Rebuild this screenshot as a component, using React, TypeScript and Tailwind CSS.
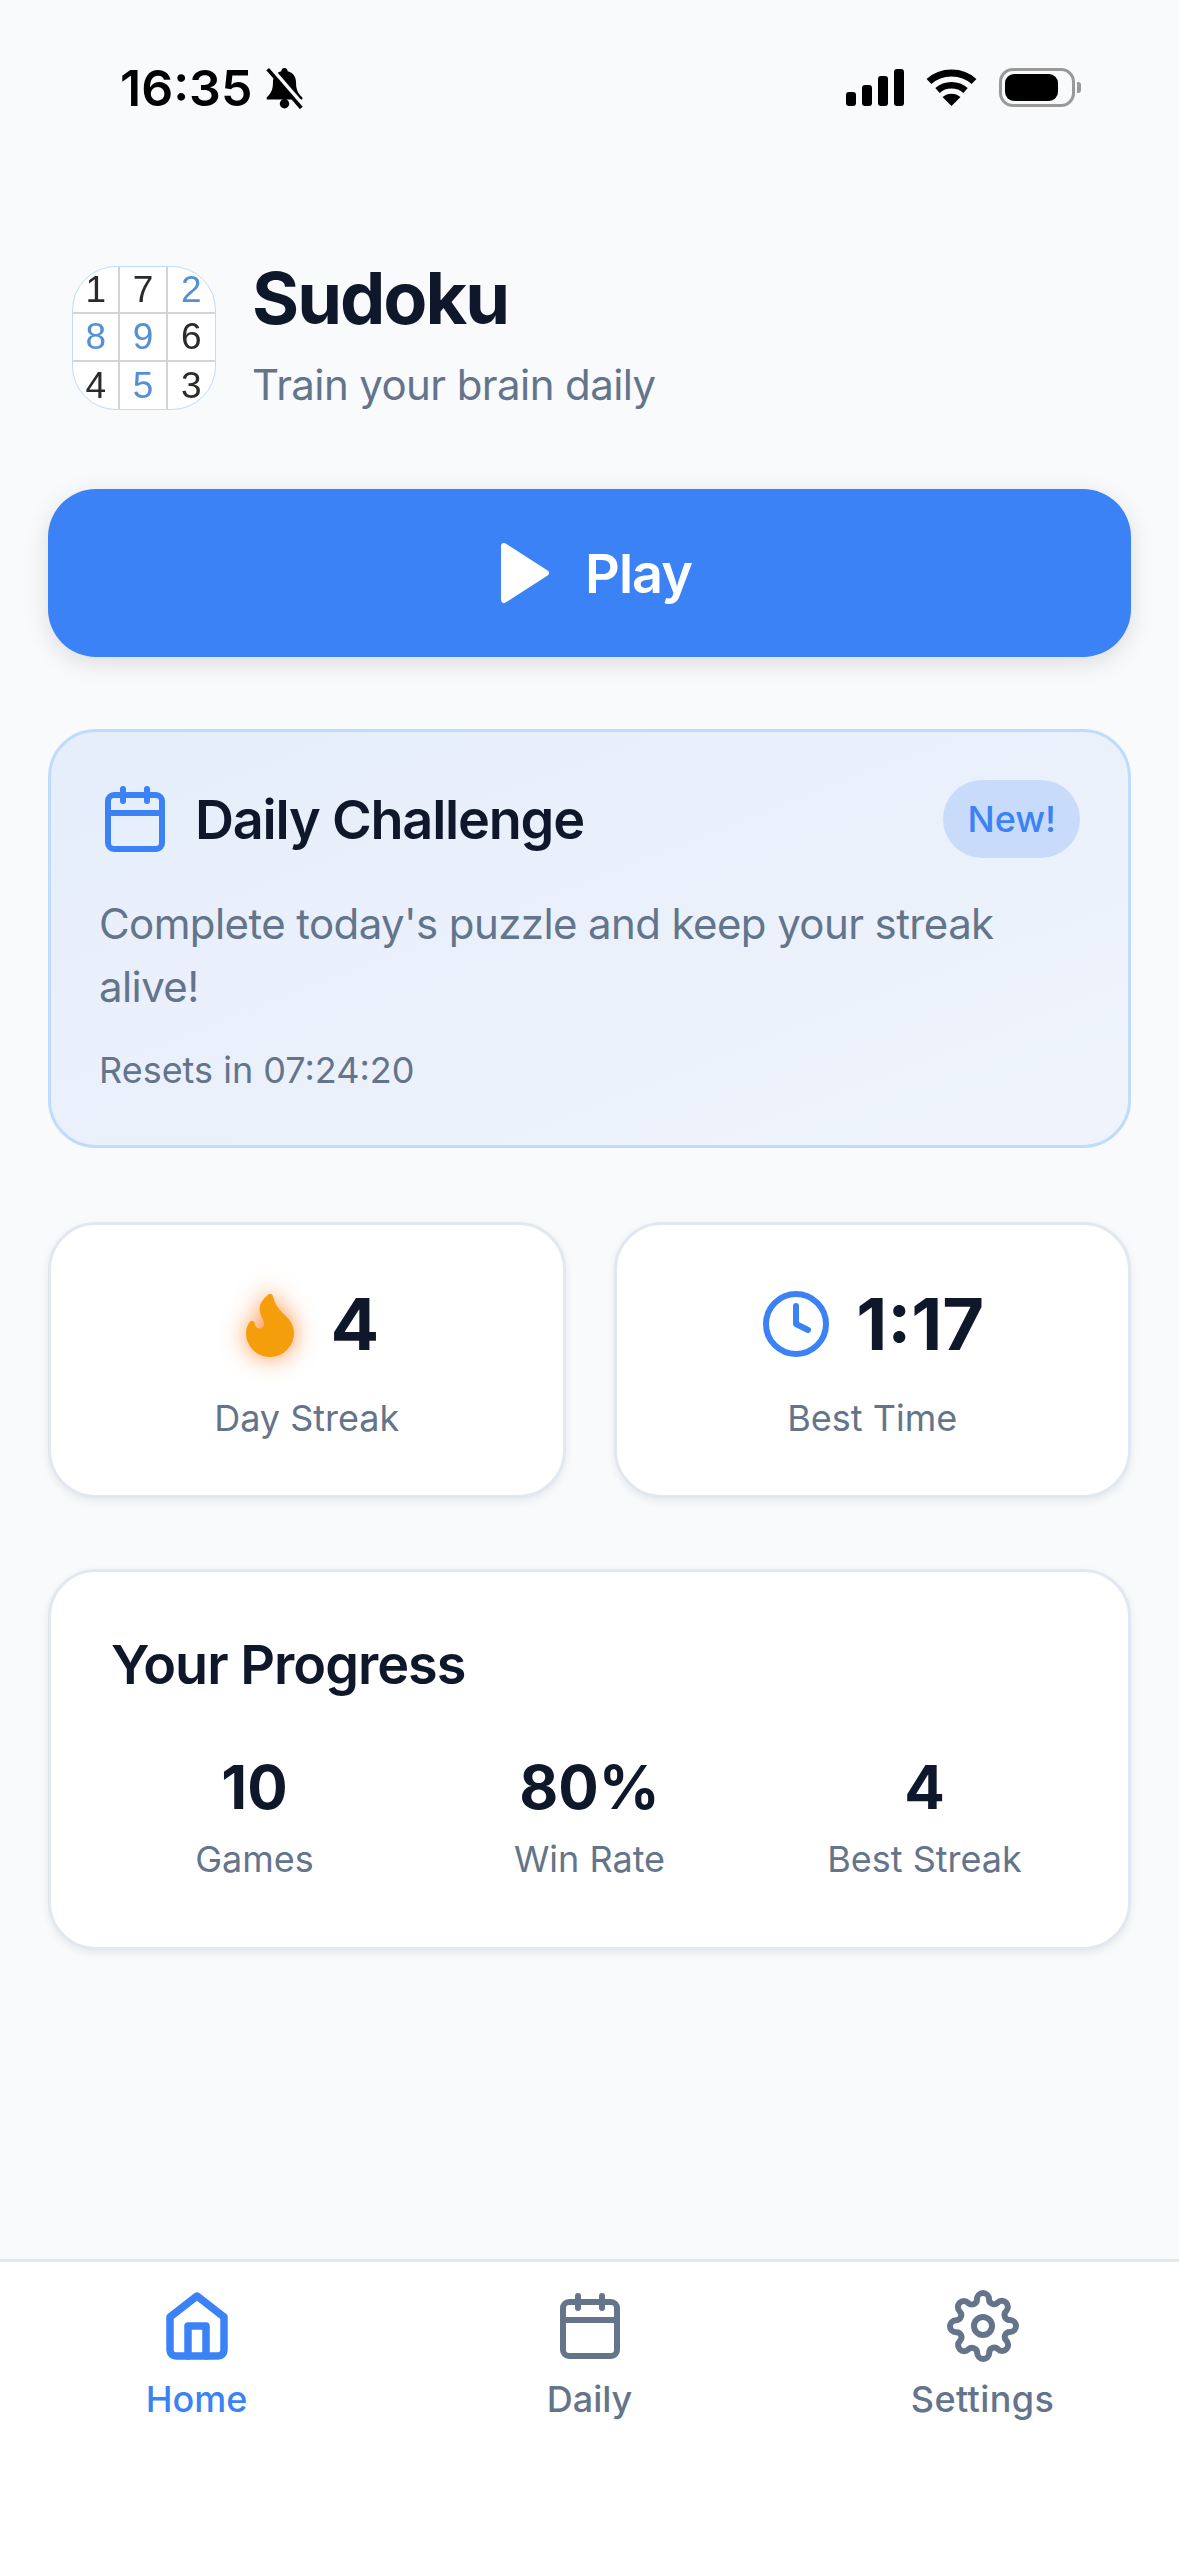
import React from 'react';
import { Flame } from 'lucide-react';
import { FiCalendar, FiClock, FiHome, FiPlay, FiSettings } from 'react-icons/fi';

const digits = [
  { value: '1', blue: false },
  { value: '7', blue: false },
  { value: '2', blue: true },
  { value: '8', blue: true },
  { value: '9', blue: true },
  { value: '6', blue: false },
  { value: '4', blue: false },
  { value: '5', blue: true },
  { value: '3', blue: false },
];

const progress = [
  { value: '10', label: 'Games' },
  { value: '80%', label: 'Win Rate' },
  { value: '4', label: 'Best Streak' },
];

const StatusBar = () => (
  <div className="h-[160px] flex items-start justify-between pt-[68px] pl-[120px] pr-[98px] shrink-0">
    <div className="flex items-center gap-[12px] h-[40px]">
      <span className="text-[50px] leading-[40px] font-semibold text-black">16:35</span>
      <svg width="41" height="42" viewBox="0 0 38 40">
        <path d="M19 1c-2 0-3 1.5-3 3-6 1.5-8 6-8 11 0 7-2 10-6 14v2h34v-2c-4-4-6-7-6-14 0-5-2-9.5-8-11 0-1.5-1-3-3-3z" fill="#000" />
        <circle cx="19" cy="35" r="4.5" fill="#000" />
        <path d="M6 1l32 37" stroke="#f8fafc" strokeWidth="4" />
        <path d="M3 2l32 37" stroke="#000" strokeWidth="3.5" />
      </svg>
    </div>
    <div className="flex items-center gap-[22px] h-[38px]">
      <div className="flex items-end gap-[6px] h-[37px]">
        <div className="w-[10px] h-[14px] rounded-[3px] bg-black" />
        <div className="w-[10px] h-[21px] rounded-[3px] bg-black" />
        <div className="w-[10px] h-[30px] rounded-[3px] bg-black" />
        <div className="w-[10px] h-[37px] rounded-[3px] bg-black" />
      </div>
      <svg width="51" height="37" viewBox="0 0 51 37" fill="none">
        <path d="M3 12.5C15 1 36 1 48 12.5" stroke="#000" strokeWidth="7" />
        <path d="M11.5 21.5C19 14.5 32 14.5 39.5 21.5" stroke="#000" strokeWidth="6.5" />
        <path d="M25.5 37L16.5 28C21.5 23.5 29.5 23.5 34.5 28Z" fill="#000" />
      </svg>
      <div className="flex items-center gap-[2px]">
        <div className="w-[76px] h-[39px] rounded-[14px] border-[3px] border-[#999999] p-[3px]">
          <div className="w-[53px] h-full rounded-[9px] bg-black" />
        </div>
        <div className="w-[4px] h-[11px] rounded-r-[3px] bg-[#999999]" />
      </div>
    </div>
  </div>
);

const SudokuLogo = () => (
  <div className="mt-[4px] w-[144px] h-[144px] rounded-[44px] overflow-hidden bg-white border border-[#bfdbfe] grid grid-cols-3 grid-rows-3 shrink-0 font-['Liberation_Sans',sans-serif]">
    {digits.map((d, i) => (
      <div
        key={i}
        className={`flex items-center justify-center border-[#d4d4d4] ${i % 3 !== 2 ? 'border-r-2' : ''} ${i < 6 ? 'border-b-2' : ''}`}
      >
        <span className={`text-[37px] leading-none blur-[0.6px] ${d.blue ? 'text-[#5590d6]' : 'text-[#2b2b2b]'}`}>{d.value}</span>
      </div>
    ))}
  </div>
);

export default function App() {
  return (
    <div className="w-[1179px] h-[2556px] flex flex-col bg-[#f8fafc] font-['Inter',sans-serif] overflow-hidden">
      <StatusBar />

      <main className="flex-1 px-[48px] pt-[102px] flex flex-col">
        {/* ヘッダー */}
        <div className="flex items-start gap-[36px] pl-[24px]">
          <SudokuLogo />
          <div>
            <h1 className="text-[72px] leading-[72px] font-bold tracking-[-2px] text-[#0f172a]">Sudoku</h1>
            <p className="text-[42px] leading-[63px] mt-[19px] tracking-[-0.6px] text-[#64748b]">Train your brain daily</p>
          </div>
        </div>

        <button className="mt-[73px] h-[168px] rounded-[48px] bg-[#3b82f6] flex items-center justify-center gap-[24px] pl-[2px] text-white text-[54px] font-semibold tracking-[-1px] shadow-[0_6px_24px_rgba(0,0,0,0.12)]">
          <FiPlay size={72} fill="#ffffff" />
          Play
        </button>

        {/* デイリーチャレンジ */}
        <section className="mt-[72px] h-[419px] rounded-[48px] border-[3px] border-[#bfdbfe] bg-gradient-to-br from-[#e6eefb] to-[#eff4fc] px-[48px] pt-[48px]">
          <div className="flex items-center justify-between h-[78px]">
            <div className="flex items-center gap-[24px]">
              <FiCalendar size={72} className="text-[#3b82f6]" />
              <h2 className="text-[54px] font-semibold tracking-[-1.2px] text-[#0f172a]">Daily Challenge</h2>
            </div>
            <span className="h-[78px] px-[24px] rounded-full bg-[#c8dbfa] flex items-center text-[36px] font-medium text-[#3b82f6]">New!</span>
          </div>
          <p className="mt-[34px] text-[42px] leading-[63px] tracking-[-0.6px] text-[#64748b]">Complete today's puzzle and keep your streak alive!</p>
          <p className="mt-[25px] text-[36px] leading-[54px] text-[#64748b]">Resets in 07:24:20</p>
        </section>

        {/* 統計カード */}
        <div className="mt-[74px] grid grid-cols-2 gap-[48px]">
          <div className="h-[276px] rounded-[48px] border-[3px] border-[#e2e8f0] bg-white shadow-[0_3px_9px_rgba(15,23,42,0.08)] flex flex-col items-center pt-[63px]">
            <div className="flex items-center gap-[24px] h-[72px]">
              <Flame size={72} strokeWidth={2} fill="#f59e0b" className="text-[#f59e0b] drop-shadow-[0_0_12px_rgba(249,115,22,0.8)]" />
              <span className="text-[72px] font-bold text-[#0f172a]">4</span>
            </div>
            <span className="mt-[31px] text-[36px] leading-[54px] text-[#64748b]">Day Streak</span>
          </div>
          <div className="h-[276px] rounded-[48px] border-[3px] border-[#e2e8f0] bg-white shadow-[0_3px_9px_rgba(15,23,42,0.08)] flex flex-col items-center pt-[63px]">
            <div className="flex items-center gap-[24px] h-[72px]">
              <FiClock size={72} className="text-[#3b82f6]" />
              <span className="text-[72px] font-bold text-[#0f172a]">1:17</span>
            </div>
            <span className="mt-[31px] text-[36px] leading-[54px] text-[#64748b]">Best Time</span>
          </div>
        </div>

        {/* 進捗 */}
        <section className="mt-[71px] h-[381px] rounded-[48px] border-[3px] border-[#e2e8f0] bg-white shadow-[0_3px_9px_rgba(15,23,42,0.08)] px-[60px] pt-[57px]">
          <h2 className="text-[54px] leading-[72px] font-semibold tracking-[-1px] text-[#0f172a]">Your Progress</h2>
          <div className="mt-[50px] grid grid-cols-3 gap-[48px]">
            {progress.map((p) => (
              <div key={p.label} className="flex flex-col items-center">
                <span className="text-[60px] leading-[72px] font-bold text-[#0f172a]">{p.value}</span>
                <span className="mt-[9px] text-[36px] leading-[54px] text-[#64748b]">{p.label}</span>
              </div>
            ))}
          </div>
        </section>
      </main>

      {/* ボトムナビ */}
      <nav className="h-[297px] border-t-[3px] border-[#e2e8f0] bg-white grid grid-cols-3 pt-[28px] shrink-0">
        <div className="flex flex-col items-center text-[#3b82f6]">
          <FiHome size={72} strokeWidth={2.5} />
          <span className="mt-[10px] text-[36px] leading-[54px] font-medium">Home</span>
        </div>
        <div className="flex flex-col items-center text-[#64748b]">
          <FiCalendar size={72} />
          <span className="mt-[10px] text-[36px] leading-[54px] font-medium">Daily</span>
        </div>
        <div className="flex flex-col items-center text-[#64748b]">
          <FiSettings size={72} />
          <span className="mt-[10px] text-[36px] leading-[54px] font-medium tracking-[0.4px]">Settings</span>
        </div>
      </nav>
    </div>
  );
}
